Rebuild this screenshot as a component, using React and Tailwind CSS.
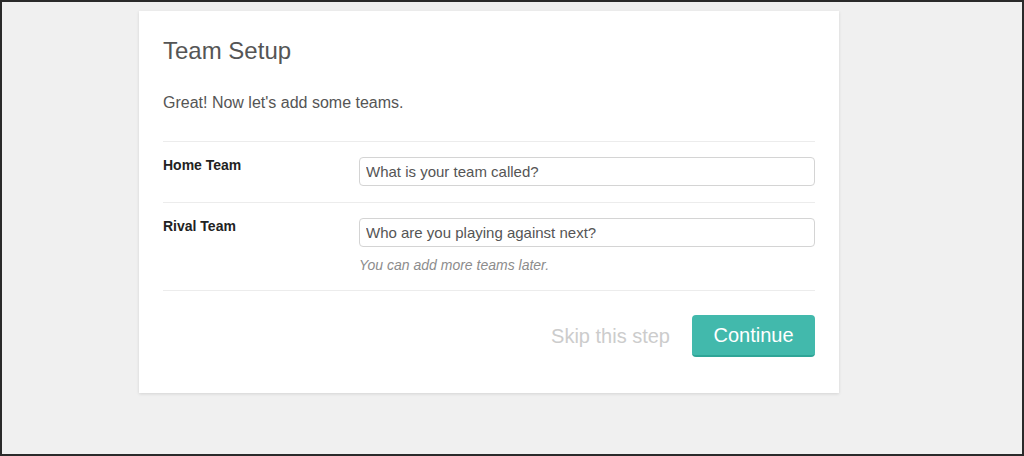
import React from 'react';

const TeamRow = ({ label, placeholder, hint }) => (
  <div className="flex border-b border-[#ececec] pt-[15px] pb-[16px]">
    <label className="w-[196px] shrink-0 mt-[-2px] text-[14px] font-bold text-[#222] leading-[20px]">
      {label}
    </label>
    <div className="flex-1">
      <input
        type="text"
        placeholder={placeholder}
        className="w-full h-[29px] px-[6px] border border-[#d4d4d4] rounded-[4px] text-[15px] text-[#444] placeholder:text-[#555] focus:outline-none"
      />
      {hint && (
        <p className="mt-[8px] mb-[-1px] text-[14px] italic text-[#8c8c8c] leading-[20px]">{hint}</p>
      )}
    </div>
  </div>
);

export default function App() {
  return (
    <div
      className="h-[456px] bg-[#f0f0f0] border-2 border-[#2a2a2a] overflow-hidden"
      style={{ fontFamily: '"Liberation Sans", Arial, sans-serif' }}
    >
      <div className="ml-[137px] mt-[9px] w-[700px] h-[382px] bg-white shadow-[0_1px_3px_rgba(0,0,0,0.12)] px-6 pt-[26px]">
        <h1 className="text-[24px] text-[#555] leading-[28px]">Team Setup</h1>
        <p className="mt-[27px] text-[16px] text-[#555] leading-[22px]">Great! Now let's add some teams.</p>

        <div className="mt-[27px] border-t border-[#ececec]">
          <TeamRow label="Home Team" placeholder="What is your team called?" />
          <TeamRow
            label="Rival Team"
            placeholder="Who are you playing against next?"
            hint="You can add more teams later."
          />
        </div>

        <div className="flex items-center justify-end gap-[22px] pt-[24px]">
          <button className="text-[20px] text-[#cccccc]">Skip this step</button>
          <button className="w-[123px] h-[42px] rounded-[4px] bg-[#42b9ac] border-b-2 border-[#2fa597] text-[20px] text-white">
            Continue
          </button>
        </div>
      </div>
    </div>
  );
}
